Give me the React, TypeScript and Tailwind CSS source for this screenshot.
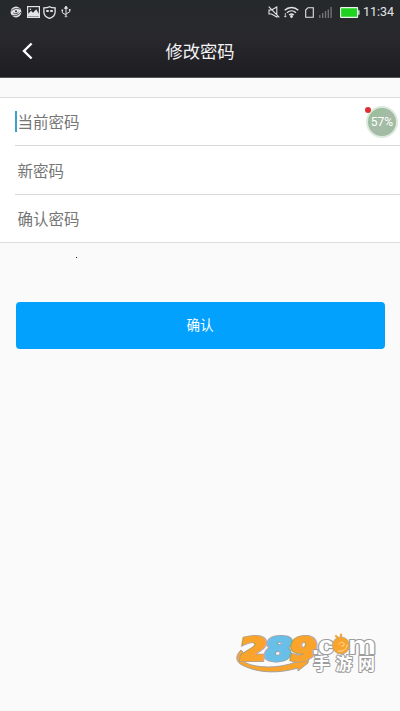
import React from 'react';

const fields = [
  { id: 'current', label: '当前密码' },
  { id: 'next', label: '新密码' },
  { id: 'confirm', label: '确认密码' },
];

function StatusBar() {
  return (
    <div className="flex h-6 items-center justify-between pl-[10px] pr-[6px] text-[#e4e4e6]">
      <div className="flex items-center gap-[5px]">
        <svg width="12" height="12" viewBox="0 0 12 12">
          <circle cx="6" cy="6" r="5.4" fill="#e4e4e6" />
          <path d="M1 5.5C3 2.5 7 1.8 10 3.2M2 9.2C5 10.5 9 9 11 6M3.2 6.8c1 1.3 3.8 1.3 5.3-.6" fill="none" stroke="#26262a" strokeWidth="0.8" />
          <circle cx="6" cy="5.3" r="1" fill="#26262a" />
        </svg>
        <svg width="13" height="12" viewBox="0 0 13 12">
          <rect x="0.6" y="0.6" width="11.8" height="10.8" fill="none" stroke="currentColor" strokeWidth="1.2" />
          <path d="M1 10.5V8l3-3.2 2 2 3.2-3.5L12 8v2.5z" fill="currentColor" />
          <circle cx="3.4" cy="3.2" r="0.8" fill="currentColor" />
        </svg>
        <svg className="-ml-[2px]" width="13" height="13" viewBox="0 0 12 12" fill="none" stroke="currentColor">
          <path d="M6 .7C4.5 1.6 2.7 1.8.8 1.8v3.7c0 2.8 2 4.8 5.2 6 3.2-1.2 5.2-3.2 5.2-6V1.8C9.3 1.8 7.5 1.6 6 .7z" strokeWidth="1.2" />
          <path d="M3 4.6h2.3M6.7 4.6H9" strokeWidth="1.7" />
        </svg>
        <svg width="10" height="12" viewBox="0 0 10 12" fill="none" stroke="currentColor">
          <path d="M5 1v9.5M1.3 4.5v2.2L5 9M8.7 3.8v2L5 8" strokeWidth="1" />
          <path d="M5 0 3.4 2.4h3.2zM3.7 10.7h2.6" fill="currentColor" strokeWidth="0.8" />
          <path d="M.5 4.2h1.6M7.9 3.7h1.6" strokeWidth="1.4" />
        </svg>
      </div>
      <div className="flex items-center">
        <svg width="12" height="12" viewBox="0 0 12 12" fill="none" stroke="currentColor" strokeWidth="1.1">
          <path d="M1 4h2.5L8.8 1v10L3.5 8H1zM.7.7l10.6 10.6" />
        </svg>
        <svg className="ml-[4px]" width="15" height="12" viewBox="0 0 15 12" fill="none" stroke="currentColor" strokeWidth="1.4">
          <path d="M.7 4.2C4.4.5 10.6.5 14.3 4.2M3 6.7c2.6-2.4 6.4-2.4 9 0M5.2 9c1.4-1.2 3.2-1.2 4.6 0" />
          <circle cx="7.5" cy="10.5" r="0.7" fill="currentColor" />
          <path d="M1.3 7v4M0 9.8l1.3 1.4 1.3-1.4" strokeWidth="0.8" />
        </svg>
        <svg className="ml-[6px]" width="9" height="11" viewBox="0 0 9 11" fill="none" stroke="currentColor">
          <path d="M3 .7h5.3v9.6H.7V3z" strokeWidth="1.1" />
        </svg>
        <svg className="ml-[5px]" width="13" height="11" viewBox="0 0 13 11" stroke="#77777b" strokeWidth="1.3">
          <path d="M.8 11V8M3.7 11V6M6.5 11V4M9.3 11V2.5M12.1 11V0" />
        </svg>
        <svg className="ml-[8px]" width="20" height="11" viewBox="0 0 20 11">
          <rect x="0.6" y="0.6" width="17" height="9.8" rx="0.5" fill="#21d321" stroke="#eaf5ea" strokeWidth="1.1" />
          <path d="M18.2 3.2h1.3v4.6h-1.3z" fill="#eaf5ea" />
        </svg>
        <span className="ml-[3px] w-[31px] whitespace-nowrap font-[Roboto,sans-serif] text-[12.5px] leading-6">11:34</span>
      </div>
    </div>
  );
}

function FloatingBall() {
  return (
    <div className="absolute right-[2px] top-[8px]">
      <div className="flex h-8 w-8 items-center justify-center rounded-full border-2 border-[#dce9dc] bg-linear-to-br from-[#92c294] via-[#a6bba8] to-[#9dbc9e] font-[Roboto,sans-serif] text-[12px] text-white">
        57%
      </div>
      <span className="absolute -left-[1px] top-[1px] h-[6px] w-[6px] rounded-full bg-[#dc3035]" />
    </div>
  );
}

function SiteLogo() {
  return (
    <svg className="absolute left-[230px] top-[625px]" width="150" height="55" viewBox="0 0 150 55">
      {/* swoosh */}
      <path
        d="M11 25C5 31 5 37 14 41C31 49 51 48 68 43L68 46L78 38L79 30L66 37C48 44 27 43 16 38C11 35 10 31 13 27Z"
        fill="#fba42c"
        stroke="#a5a19b"
        strokeWidth="1"
        strokeLinejoin="round"
      />
      <g
        transform="translate(8 34.5) skewX(-10)"
        fontFamily="'DejaVu Sans', sans-serif"
        fontWeight="700"
        fontSize="31"
        strokeLinejoin="miter"
      >
        <g stroke="#a5a19b" strokeWidth="4">
          <text x="0" y="0" textLength="27" lengthAdjust="spacingAndGlyphs" fill="#fba42c">2</text>
          <text x="25" y="0" textLength="27" lengthAdjust="spacingAndGlyphs" fill="#68bfe8">8</text>
          <text x="50" y="0" textLength="27" lengthAdjust="spacingAndGlyphs" fill="#fba42c">9</text>
        </g>
        <g strokeWidth="2.4">
          <text x="0" y="0" textLength="27" lengthAdjust="spacingAndGlyphs" fill="#fba42c" stroke="#fba42c">2</text>
          <text x="25" y="0" textLength="27" lengthAdjust="spacingAndGlyphs" fill="#68bfe8" stroke="#68bfe8">8</text>
          <text x="50" y="0" textLength="27" lengthAdjust="spacingAndGlyphs" fill="#fba42c" stroke="#fba42c">9</text>
        </g>
      </g>
      <g
        fontFamily="'Liberation Sans', sans-serif"
        fontWeight="700"
        fontSize="26"
        fill="#fff"
        stroke="#9c9c9c"
        strokeWidth="2.2"
        strokeLinejoin="round"
        paintOrder="stroke"
      >
        <text x="82" y="29" textLength="7" lengthAdjust="spacingAndGlyphs">.</text>
        <text x="88" y="29" textLength="16" lengthAdjust="spacingAndGlyphs">c</text>
        <text x="118" y="29" textLength="28" lengthAdjust="spacingAndGlyphs">m</text>
      </g>
      {/* snail in place of the "o" */}
      <g fill="none" strokeLinecap="round">
        <path d="M108 13l-2-2M111 12V9.5" stroke="#fba42c" strokeWidth="2.2" />
        <circle cx="111" cy="20.5" r="8.6" fill="#fba42c" stroke="#b1a28a" strokeWidth="0.8" />
        <path d="M109 19c1-3 6-2 5 1-.3 1-1.5 1.5-2.5 1M108 26c5 1 9-2 9-6" stroke="#ffe0ad" strokeWidth="1" />
      </g>
      <text
        x="83"
        y="45"
        textLength="62"
        fontFamily="'Noto Sans CJK SC', sans-serif"
        fontWeight="700"
        fontSize="17"
        fill="#fff"
        stroke="#9c9c9c"
        strokeWidth="2"
        strokeLinejoin="round"
        paintOrder="stroke"
      >
        手游网
      </text>
    </svg>
  );
}

export default function App() {
  return (
    <div className="relative h-[711px] w-[400px] overflow-hidden bg-[#fafafa] font-['Noto_Sans_CJK_SC',sans-serif]">
      <header className="h-[78px] border-b border-[#55555a] bg-linear-to-b from-[#25292c] via-[#29292d] to-[#1d1c20]">
        <StatusBar />
        <div className="grid h-[54px] grid-cols-[56px_1fr_56px] items-center">
          <button className="flex pl-[22px]" aria-label="返回">
            <svg width="11" height="18" viewBox="0 0 11 18" fill="none" stroke="#fff" strokeWidth="2.4">
              <path d="M9.6 1.5 2 9l7.6 7.5" />
            </svg>
          </button>
          <h1 className="text-center text-[17.3px] leading-6 text-[#f4f4f5]">修改密码</h1>
        </div>
      </header>

      <main className="pt-[19px]">
        <div className="relative border-y border-[#dcdcdc] bg-white">
          <div className="divide-y divide-[#dadada] pl-[15px]">
            {fields.map((field, i) => (
              <div key={field.id} className="flex h-[49px] items-center first:h-12 last:h-[47px]">
                <span className={i === 0 ? 'mr-[0.5px] h-[21px] w-[2px] bg-[#3aa0cf]' : 'mr-[0.5px] w-[2px]'} />
                <span className="pb-px text-[15.5px] leading-6 text-[#757575]">{field.label}</span>
              </div>
            ))}
          </div>
          <FloatingBall />
        </div>

        <div className="flex h-[58.5px] pl-[76px] pt-[14px]">
          <span className="h-px w-px bg-[#15155a]" />
        </div>

        <button className="mx-auto block h-[47px] w-[369px] rounded-[4px] bg-[#03a1fe] pb-px text-[13.5px] text-white">
          确认
        </button>
      </main>

      <SiteLogo />
    </div>
  );
}
